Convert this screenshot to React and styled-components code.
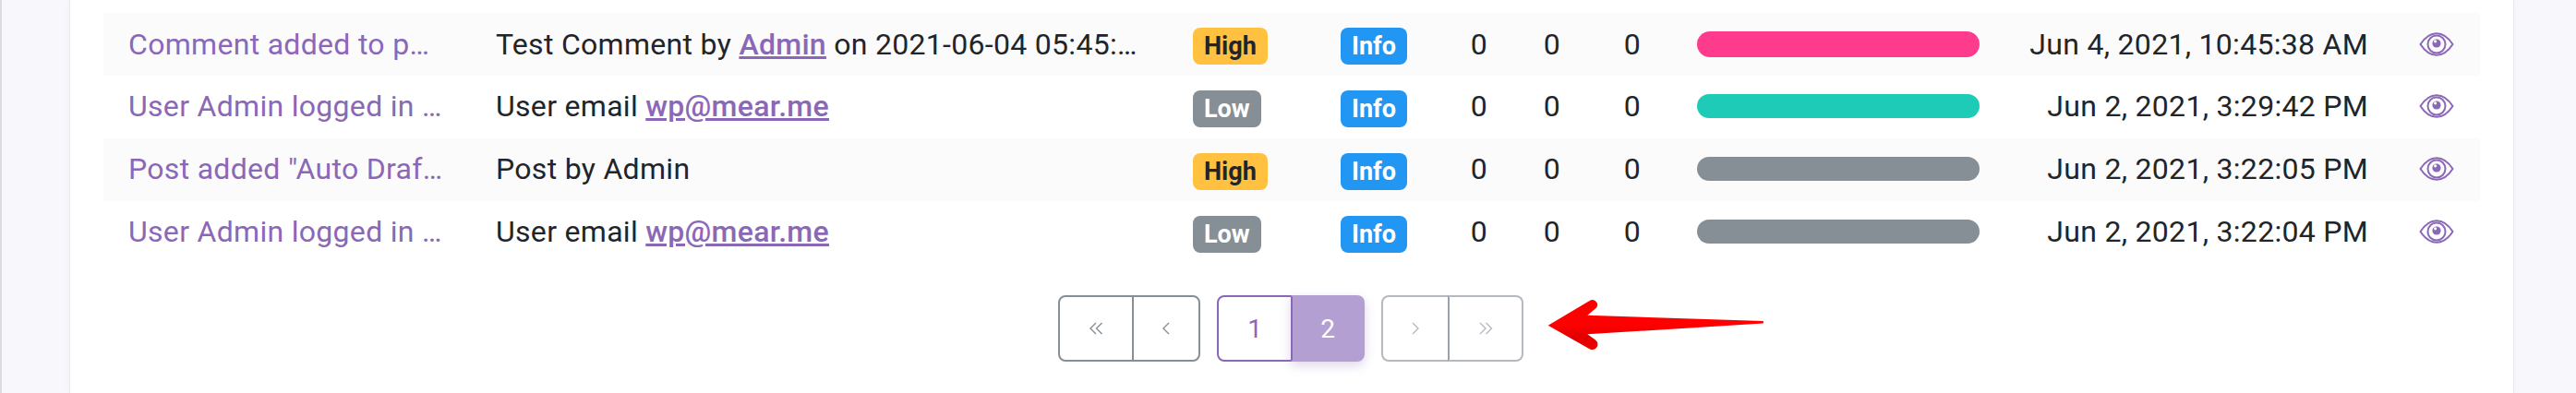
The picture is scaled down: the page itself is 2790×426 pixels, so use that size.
import React from 'react';
import styled, { createGlobalStyle } from 'styled-components';

const GlobalStyle = createGlobalStyle`
  html, body {
    margin: 0;
    padding: 0;
    width: 2790px;
    height: 426px;
    overflow: hidden;
    background: #f8f7fb;
    font-family: Roboto, "Liberation Sans", sans-serif;
    color: #212529;
  }
`;

const Page = styled.div`
  width: 2790px;
  height: 426px;
  box-sizing: border-box;
  padding: 0 68px 0 74px;
  border-left: 2px solid #dcdbde;
`;

const Card = styled.div`
  height: 426px;
  box-sizing: border-box;
  background: #fff;
  padding: 14px 36px 0;
  box-shadow: 0 0 0 1px #e9e8ec, 0 0 10px rgba(0, 0, 0, 0.04);
`;

const Row = styled.div`
  display: grid;
  grid-template-columns: 425px 755px 160px 110px 80px 78px 96px 328px 421px 121px;
  align-items: center;
  box-sizing: border-box;
  height: 68px;
  padding-bottom: ${(p) => (p.$lifted ? 3 : 0)}px;
  font-size: 32px;
  letter-spacing: 0.3px;
  background: ${(p) => (p.$striped ? '#fcfbfc' : '#fff')};
`;

const Subject = styled.a`
  width: 342px;
  margin-left: 27px;
  overflow: hidden;
  white-space: nowrap;
  text-overflow: ellipsis;
  color: #8b68b7;
`;

const Message = styled.div`
  width: 700px;
  overflow: hidden;
  white-space: nowrap;
  text-overflow: ellipsis;
`;

const InlineLink = styled.a`
  color: #8b68b7;
  font-weight: 500;
  text-decoration: underline;
`;

const Badge = styled.span`
  display: inline-flex;
  align-items: center;
  justify-content: center;
  justify-self: start;
  height: 40px;
  padding: 0 12px;
  margin-top: ${(p) => (p.$lifted ? 7 : 4)}px;
  border-radius: 8px;
  font-size: 27px;
  letter-spacing: 0;
  font-weight: 700;
  color: ${(p) => p.$text || '#fff'};
  background: ${(p) => p.$bg};
`;

const Count = styled.div`
  text-align: center;
`;

const Bar = styled.div`
  height: ${(p) => p.$height}px;
  margin-left: 22px;
  border-radius: 14px;
  background: ${(p) => p.$color};
`;

const Time = styled.div`
  text-align: right;
  white-space: nowrap;
`;

const EyeCell = styled.div`
  display: flex;
  padding-left: 27px;
  justify-content: center;
  color: #8b68b7;
`;

const Footer = styled.div`
  position: relative;
  display: flex;
  gap: 18px;
  padding: 34px 0 0 1034px;
`;

const PageGroup = styled.div`
  display: flex;
  height: 72px;
`;

const PageButton = styled.button`
  width: ${(p) => p.$width}px;
  box-sizing: border-box;
  padding: 0;
  display: flex;
  align-items: center;
  justify-content: center;
  font: 400 28px Roboto, sans-serif;
  background: ${(p) => (p.$active ? '#b39fd1' : '#fff')};
  color: ${(p) => (p.$active ? '#fff' : p.$color)};
  border: 2px solid ${(p) => (p.$active ? '#b39fd1' : p.$color)};
  border-left-color: ${(p) => p.$divider || (p.$active ? '#b39fd1' : p.$color)};
  box-shadow: ${(p) => (p.$active ? '0 4px 12px rgba(139, 104, 183, 0.28)' : 'none')};
  &:first-child {
    border-radius: 8px 0 0 8px;
  }
  &:last-child {
    border-radius: 0 8px 8px 0;
    margin-left: -2px;
  }
`;

const ArrowMark = styled.svg`
  position: absolute;
  left: 1548px;
  top: 24px;
`;

const Eye = () => (
  <svg width="38" height="26" viewBox="0 0 38 26" fill="none" stroke="currentColor" strokeWidth="2">
    <path d="M1.5 13 C7 4.5 12.5 1.2 19 1.2 C25.5 1.2 31 4.5 36.5 13 C31 21.5 25.5 24.8 19 24.8 C12.5 24.8 7 21.5 1.5 13 Z" />
    <circle cx="19" cy="13" r="9.5" />
    <circle cx="19" cy="12" r="4.6" fill="currentColor" stroke="none" />
    <circle cx="17.6" cy="9.8" r="1.6" fill="#fdfcfd" stroke="none" />
  </svg>
);

const Chevrons = ({ dir, double }) => {
  const d = dir === 'left' ? 'M7 1 L1 7 L7 13' : 'M1 1 L7 7 L1 13';
  return (
    <svg width={double ? 15 : 8} height="14" viewBox={double ? '0 0 15 14' : '0 0 8 14'} fill="none" stroke="currentColor" strokeWidth="1.4">
      <path d={d} />
      {double && <path d={d} transform="translate(6.5 0)" />}
    </svg>
  );
};

const rows = [
  {
    subject: 'Comment added to post "Hello world"',
    message: (
      <>
        Test Comment by <InlineLink>Admin</InlineLink> on 2021-06-04 05:45:38 for the post
      </>
    ),
    severity: 'High',
    bar: '#ff3b8d',
    barHeight: 28,
    time: 'Jun 4, 2021, 10:45:38 AM',
  },
  {
    subject: 'User Admin logged in from 127.0.0.1',
    message: (
      <>
        User email <InlineLink>wp@mear.me</InlineLink>
      </>
    ),
    severity: 'Low',
    bar: '#1ecbb6',
    barHeight: 26,
    time: 'Jun 2, 2021, 3:29:42 PM',
  },
  {
    subject: 'Post added "Auto Draft" by Admin',
    message: 'Post by Admin',
    severity: 'High',
    bar: '#868e96',
    barHeight: 26,
    time: 'Jun 2, 2021, 3:22:05 PM',
  },
  {
    subject: 'User Admin logged in from 127.0.0.1',
    message: (
      <>
        User email <InlineLink>wp@mear.me</InlineLink>
      </>
    ),
    severity: 'Low',
    bar: '#868e96',
    barHeight: 26,
    time: 'Jun 2, 2021, 3:22:04 PM',
  },
];

const App = () => (
  <Page>
    <GlobalStyle />
    <Card>
      {rows.map((row, i) => (
        <Row key={row.time} $striped={i % 2 === 0} $lifted={i > 0}>
          <Subject>{row.subject}</Subject>
          <Message>{row.message}</Message>
          {row.severity === 'High' ? (
            <Badge $bg="#ffc13f" $text="#212529" $lifted={i > 0}>High</Badge>
          ) : (
            <Badge $bg="#868e96" $lifted={i > 0}>Low</Badge>
          )}
          <Badge $bg="#2196f3" $lifted={i > 0}>Info</Badge>
          <Count>0</Count>
          <Count>0</Count>
          <Count>0</Count>
          <Bar $color={row.bar} $height={row.barHeight} />
          <Time>{row.time}</Time>
          <EyeCell>
            <Eye />
          </EyeCell>
        </Row>
      ))}
      <Footer>
        <PageGroup>
          <PageButton $width={82} $color="#868e96"><Chevrons dir="left" double /></PageButton>
          <PageButton $width={74} $color="#868e96"><Chevrons dir="left" /></PageButton>
        </PageGroup>
        <PageGroup>
          <PageButton $width={82} $color="#8b68b7">1</PageButton>
          <PageButton $width={80} $color="#8b68b7" $divider="#8b68b7" $active>2</PageButton>
        </PageGroup>
        <PageGroup>
          <PageButton $width={74} $color="#b4b9bf"><Chevrons dir="right" /></PageButton>
          <PageButton $width={82} $color="#b4b9bf" $divider="#9aa1a9"><Chevrons dir="right" double /></PageButton>
        </PageGroup>
        <ArrowMark width="260" height="90" viewBox="0 0 260 90">
          <defs>
            <linearGradient id="arrowFill" x1="0" y1="0" x2="0" y2="1">
              <stop offset="0.5" stopColor="#ff0000" />
              <stop offset="0.75" stopColor="#e20000" />
              <stop offset="1" stopColor="#f00000" />
            </linearGradient>
          </defs>
          <path
            d="M16.7 42.7 L62.5 15.5 Q67 14 69.5 18 Q71.5 21.5 68 24.5 L59.3 31.7 L249.5 38 Q250.5 39.3 249.5 40.5 L59.3 52.3 L68 58.5 Q71.5 61.5 70 65.5 Q67 70.5 62 68.5 Z"
            fill="url(#arrowFill)"
          />
        </ArrowMark>
      </Footer>
    </Card>
  </Page>
);

export default App;
